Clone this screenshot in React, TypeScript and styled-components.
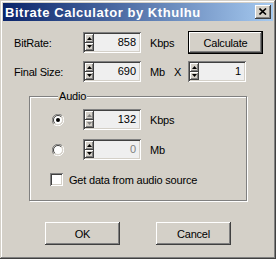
import React from "react";
import styled, { createGlobalStyle } from "styled-components";

const Global = createGlobalStyle`
  html, body { margin: 0; padding: 0; background: #d4d0c8; }
  body {
    font-family: "Liberation Sans", Arial, sans-serif;
    font-size: 11px;
    color: #000;
  }
  * { box-sizing: border-box; }
`;

const raisedShadow =
  "inset -1px -1px #404040, inset 1px 1px #fff, inset -2px -2px #808080, inset 2px 2px #d4d0c8";
const sunkenShadow =
  "inset 1px 1px #808080, inset -1px -1px #fff, inset 2px 2px #404040, inset -2px -2px #d4d0c8";

const Window = styled.div`
  width: 276px;
  height: 259px;
  background: #d4d0c8;
  padding: 3px;
  display: flex;
  flex-direction: column;
  box-shadow: inset -1px -1px #404040, inset 1px 1px #d4d0c8,
    inset -2px -2px #808080, inset 2px 2px #fff;
`;

const TitleBar = styled.div`
  height: 18px;
  flex: none;
  display: flex;
  align-items: center;
  justify-content: space-between;
  padding: 0 2px 0 2px;
  background: linear-gradient(to right, #0a246a, #a6caf0);
`;

const TitleText = styled.span`
  color: #fff;
  font-weight: bold;
  font-size: 13px;
  letter-spacing: 0.55px;
  white-space: nowrap;
`;

const CloseButton = styled.div`
  width: 16px;
  height: 14px;
  background: #d4d0c8;
  box-shadow: ${raisedShadow};
  display: flex;
  align-items: center;
  justify-content: center;
  padding-right: 1px;
  padding-bottom: 1px;
`;

const Body = styled.div`
  padding: 10px 0 0 11px;
  display: flex;
  flex-direction: column;
`;

const Row = styled.div<{ $top?: number }>`
  display: flex;
  align-items: center;
  height: 23px;
  margin-top: ${(p) => p.$top ?? 0}px;
`;

const Label = styled.span`
  width: 69px;
  flex: none;
  white-space: nowrap;
  letter-spacing: -0.2px;
`;

const Unit = styled.span<{ $w?: number }>`
  width: ${(p) => p.$w ?? 47}px;
  flex: none;
  padding-left: 9px;
  display: flex;
  letter-spacing: -0.2px;
`;

const Times = styled.span`
  margin-left: 9px;
`;

const SpinBox = styled.div<{ $w?: number }>`
  width: ${(p) => p.$w ?? 58}px;
  height: 21px;
  flex: none;
  display: flex;
  padding: 2px;
  background: #efefef;
  box-shadow: ${sunkenShadow};
`;

const SpinButtons = styled.div`
  width: 9px;
  flex: none;
  display: flex;
  flex-direction: column;
`;

const SpinButton = styled.div`
  flex: 1;
  background: #d4d0c8;
  box-shadow: inset -1px -1px #404040, inset 1px 1px #fff, inset -2px -2px #808080;
  display: flex;
  align-items: center;
  justify-content: center;
  padding-right: 1px;
`;

const SpinValue = styled.div<{ $disabled?: boolean }>`
  flex: 1;
  text-align: right;
  padding-right: 3px;
  line-height: 17px;
  color: ${(p) => (p.$disabled ? "#808080" : "#000")};
`;

const PushButton = styled.div<{ $default?: boolean }>`
  width: 75px;
  height: 23px;
  flex: none;
  display: flex;
  align-items: center;
  justify-content: center;
  background: #d4d0c8;
  letter-spacing: -0.2px;
  ${(p) =>
    p.$default
      ? `box-shadow: inset 0 0 0 1px #000, inset -2px -2px #404040, inset 2px 2px #fff, inset -3px -3px #808080;`
      : `box-shadow: ${raisedShadow};`}
`;

const Group = styled.fieldset`
  margin: 7px 0 0 15px;
  width: 218px;
  height: 111px;
  padding: 6px 0 0 22px;
  border: 1px solid #808080;
  box-shadow: inset 1px 1px #fff, 1px 1px #fff;
  display: flex;
  flex-direction: column;
  min-width: 0;
`;

const GroupCaption = styled.legend`
  margin-left: 6px;
  padding: 0 1px;
  line-height: 13px;
  background: #d4d0c8;
  letter-spacing: -0.2px;
`;

const AudioRow = styled.div<{ $top?: number }>`
  display: flex;
  align-items: center;
  height: 21px;
  margin-top: ${(p) => p.$top ?? 0}px;
`;

const RadioCell = styled.div`
  width: 31px;
  flex: none;
  display: flex;
  align-items: center;
`;

const CheckRow = styled.div`
  display: flex;
  align-items: center;
  height: 13px;
  margin: 13px 0 0 -2px;
  gap: 6px;
  letter-spacing: -0.2px;
  white-space: nowrap;
`;

const CheckBox = styled.span`
  width: 13px;
  height: 13px;
  flex: none;
  background: #fff;
  box-shadow: ${sunkenShadow};
`;

const ButtonRow = styled.div`
  display: flex;
  gap: 36px;
  margin: 21px 0 0 31px;
`;

const Arrow = ({ up, color }: { up?: boolean; color: string }) => (
  <svg width="5" height="3" viewBox="0 0 5 3">
    {up ? (
      <polygon points="2.5,0 5,3 0,3" fill={color} />
    ) : (
      <polygon points="0,0 5,0 2.5,3" fill={color} />
    )}
  </svg>
);

const Spin = ({
  value,
  w,
  arrowColor = "#000",
  disabled,
}: {
  value: string;
  w?: number;
  arrowColor?: string;
  disabled?: boolean;
}) => (
  <SpinBox $w={w}>
    <SpinButtons>
      <SpinButton>
        <Arrow up color={arrowColor} />
      </SpinButton>
      <SpinButton>
        <Arrow color={arrowColor} />
      </SpinButton>
    </SpinButtons>
    <SpinValue $disabled={disabled}>{value}</SpinValue>
  </SpinBox>
);

const Radio = ({ checked }: { checked?: boolean }) => (
  <svg width="12" height="12" viewBox="0 0 12 12">
    <path d="M10.24 1.76 A6 6 0 0 0 1.76 10.24" fill="none" stroke="#808080" strokeWidth="1" />
    <path d="M1.76 10.24 A6 6 0 0 0 10.24 1.76" fill="none" stroke="#fff" strokeWidth="1" />
    <circle cx="6" cy="6" r="4.5" fill="#fff" />
    <path d="M9.2 2.8 A4.5 4.5 0 0 0 2.8 9.2" fill="none" stroke="#404040" strokeWidth="1" />
    <path d="M2.8 9.2 A4.5 4.5 0 0 0 9.2 2.8" fill="none" stroke="#d4d0c8" strokeWidth="1" />
    {checked && <circle cx="6" cy="6" r="2" fill="#000" />}
  </svg>
);

export default function App() {
  return (
    <>
      <Global />
      <Window>
        <TitleBar>
          <TitleText>Bitrate Calculator by Kthulhu</TitleText>
          <CloseButton>
            <svg width="8" height="7" viewBox="0 0 8 7">
              <path d="M0.5 0.5 L7 6.5 M7 0.5 L0.5 6.5" stroke="#000" strokeWidth="1.6" />
            </svg>
          </CloseButton>
        </TitleBar>
        <Body>
          <Row>
            <Label>BitRate:</Label>
            <Spin value="858" />
            <Unit>Kbps</Unit>
            <PushButton $default>Calculate</PushButton>
          </Row>
          <Row $top={6}>
            <Label>Final Size:</Label>
            <Spin value="690" />
            <Unit>
              Mb<Times>X</Times>
            </Unit>
            <Spin value="1" />
          </Row>
          <Group>
            <GroupCaption>Audio</GroupCaption>
            <AudioRow>
              <RadioCell>
                <Radio checked />
              </RadioCell>
              <Spin value="132" arrowColor="#808080" />
              <Unit>Kbps</Unit>
            </AudioRow>
            <AudioRow $top={9}>
              <RadioCell>
                <Radio />
              </RadioCell>
              <Spin value="0" disabled />
              <Unit>Mb</Unit>
            </AudioRow>
            <CheckRow>
              <CheckBox />
              <span>Get data from audio source</span>
            </CheckRow>
          </Group>
          <ButtonRow>
            <PushButton>OK</PushButton>
            <PushButton>Cancel</PushButton>
          </ButtonRow>
        </Body>
      </Window>
    </>
  );
}
